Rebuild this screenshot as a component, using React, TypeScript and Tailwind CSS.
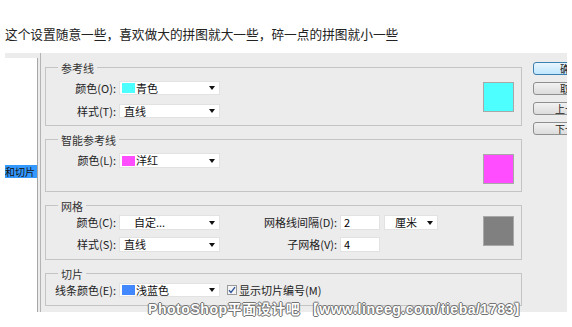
const font = { fontFamily: '"Noto Sans CJK SC", "Noto Sans", sans-serif' };

function Arrow() {
  return (
    <svg width="6" height="4" viewBox="0 0 6 4" className="shrink-0">
      <path d="M0 0H6L3 4Z" fill="#111" />
    </svg>
  );
}

function Select({
  width,
  height = 14,
  swatch,
  text,
  indent = 4,
}: {
  width: number;
  height?: number;
  swatch?: string;
  text: string;
  indent?: number;
}) {
  return (
    <div
      className="flex items-center bg-white border border-[#e2e2e2] pr-[4px]"
      style={{ width, height }}
    >
      {swatch && <span className="ml-[2px] h-[10px] w-[13px] shrink-0" style={{ background: swatch }} />}
      <span className="flex-1 text-[11px] leading-none text-[#111]" style={{ paddingLeft: swatch ? 1 : indent }}>
        {text}
      </span>
      <Arrow />
    </div>
  );
}

function Label({ w, children }: { w: number; children: React.ReactNode }) {
  return (
    <span className="shrink-0 text-right text-[11px] leading-none text-[#222] pr-[3px]" style={{ width: w }}>
      {children}
    </span>
  );
}

function Group({
  title,
  h,
  pt,
  swatch,
  swatchTop,
  children,
}: {
  title: string;
  h: number;
  pt: number;
  swatch?: string;
  swatchTop?: number;
  children: React.ReactNode;
}) {
  return (
    <div className="relative w-[477px] border border-[#c4c4c4] flex shrink-0" style={{ height: h }}>
      <span className="absolute -top-[8px] left-[12px] px-[3px] bg-[#ececec] text-[11px] leading-[16px] text-[#333]">
        {title}
      </span>
      <div className="flex-1 flex flex-col" style={{ paddingTop: pt - 1 }}>
        {children}
      </div>
      {swatch && (
        <div
          className="w-[31px] h-[30px] border border-[#a8a8a8] mr-[7px] shrink-0"
          style={{ background: swatch, marginTop: (swatchTop ?? 15) - 1 }}
        />
      )}
    </div>
  );
}

function Button({ label, primary }: { label: string; primary?: boolean }) {
  return (
    <div
      className={
        'h-[13px] w-[74px] shrink-0 rounded-[3px] border flex items-center justify-center text-[10px] leading-none text-[#222] ' +
        (primary
          ? 'border-[#3c7fb1] bg-gradient-to-b from-[#eaf6fd] to-[#bee6fd]'
          : 'border-[#8e8f8f] bg-gradient-to-b from-[#f2f2f2] to-[#dcdcdc]')
      }
    >
      {label}
    </div>
  );
}

export default function App() {
  return (
    <div className="relative w-[572px] h-[327px] bg-white overflow-hidden" style={font}>
      <div className="h-[53px] pl-[5px] pt-[26px] text-[12.7px] leading-[16px] text-[#222]">
        这个设置随意一些，喜欢做大的拼图就大一些，碎一点的拼图就小一些
      </div>

      <div className="ml-[5px] w-[562px] h-[259px] bg-[#ececec] flex overflow-hidden">
        <div className="w-[33px] mt-[5px] bg-white border-r border-[#a6a6a6] pt-[107px] shrink-0">
          <div className="h-[13px] bg-[#3399ff] text-[10px] leading-[13px] text-[#111] whitespace-nowrap overflow-hidden">
            和切片
          </div>
        </div>

        <div className="ml-[2px] border-l border-[#b4b4b4] pl-[4px] pt-[14px] flex flex-col gap-[13px] shrink-0">
          <Group title="参考线" h={59} pt={14} swatch="#4dffff">
            <div className="flex items-center">
              <Label w={73}>颜色(O):</Label>
              <Select width={101} swatch="#4dffff" text="青色" />
            </div>
            <div className="flex items-center mt-[9px]">
              <Label w={73}>样式(T):</Label>
              <Select width={101} text="直线" />
            </div>
          </Group>

          <Group title="智能参考线" h={53} pt={14} swatch="#ff4dff">
            <div className="flex items-center">
              <Label w={73}>颜色(L):</Label>
              <Select width={101} height={15} swatch="#ff4dff" text="洋红" />
            </div>
          </Group>

          <Group title="网格" h={55} pt={10} swatch="#808080" swatchTop={11}>
            <div className="flex items-center">
              <Label w={73}>颜色(C):</Label>
              <Select width={101} height={15} text="自定..." indent={14} />
              <Label w={120}>网格线间隔(D):</Label>
              <div className="w-[40px] h-[15px] bg-white border border-[#e2e2e2] pl-[3px] text-[11px] leading-[13px]">2</div>
              <div className="ml-[4px]">
                <Select width={54} height={15} text="厘米" indent={10} />
              </div>
            </div>
            <div className="flex items-center mt-[7px]">
              <Label w={73}>样式(S):</Label>
              <Select width={101} height={15} text="直线" />
              <Label w={120}>子网格(V):</Label>
              <div className="w-[40px] h-[15px] bg-white border border-[#e2e2e2] pl-[3px] text-[11px] leading-[13px]">4</div>
            </div>
          </Group>

          <Group title="切片" h={33} pt={10}>
            <div className="flex items-center">
              <Label w={73}>线条颜色(E):</Label>
              <Select width={101} swatch="#4488ff" text="浅蓝色" />
              <span className="ml-[7px] w-[10px] h-[10px] border border-[#9a9a9a] bg-[#f4f4f4] flex items-center justify-center">
                <svg width="8" height="8" viewBox="0 0 8 8">
                  <path d="M1 4.2L3 6.4L7 1.2" stroke="#2a4f9a" strokeWidth="1.3" fill="none" />
                </svg>
              </span>
              <span className="ml-[2px] text-[11px] leading-none text-[#222]">显示切片编号(M)</span>
            </div>
          </Group>
        </div>

        <div className="ml-[11px] pt-[9px] flex flex-col gap-[7px] shrink-0">
          <Button label="确定" primary />
          <Button label="取消" />
          <Button label="上一个" />
          <Button label="下一个" />
        </div>
      </div>

      <div
        className="absolute left-[148px] top-[301px] text-[14px] leading-[16px] tracking-[0.55px] font-bold text-white whitespace-nowrap [text-shadow:0_0_1px_#555,1px_0_0_#777,-1px_0_0_#777,0_1px_0_#777,0_-1px_0_#777]"
        style={{ fontFamily: '"Liberation Sans", "Noto Sans CJK SC", sans-serif' }}
      >
        PhotoShop平面设计吧 【www.lineeg.com/tieba/1783】
      </div>
    </div>
  );
}
